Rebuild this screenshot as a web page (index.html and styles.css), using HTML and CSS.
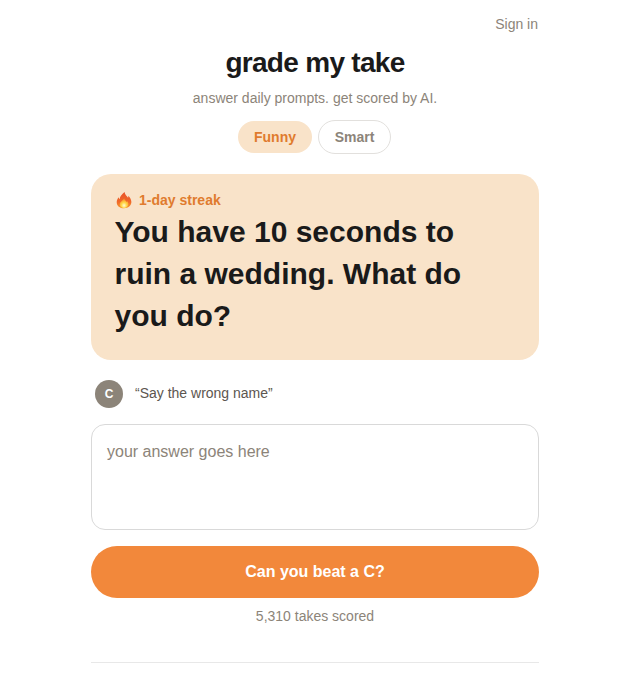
FILE: index.html
```html
<!DOCTYPE html>
<html lang="en">
<head>
<meta charset="utf-8">
<title>grade my take</title>
<link rel="stylesheet" href="styles.css">
</head>
<body>
<main class="page">
  <nav class="topbar"><a class="signin" href="#">Sign in</a></nav>
  <header class="intro">
    <h1 class="title">grade my take</h1>
    <p class="subtitle">answer daily prompts. get scored by AI.</p>
    <div class="tabs">
      <button class="tab tab-active">Funny</button>
      <button class="tab tab-idle">Smart</button>
    </div>
  </header>
  <section class="card">
    <div class="streak">
      <svg class="flame" viewBox="0 0 18 20" width="16" height="18" preserveAspectRatio="none" aria-hidden="true">
        <defs>
          <linearGradient id="outer" x1="0" y1="0" x2="0" y2="1">
            <stop offset="0" stop-color="#e8522a"/>
            <stop offset="0.6" stop-color="#f0682a"/>
            <stop offset="1" stop-color="#f79a2e"/>
          </linearGradient>
          <radialGradient id="inner" cx="0.5" cy="0.72" r="0.6">
            <stop offset="0" stop-color="#fffbd8"/>
            <stop offset="0.5" stop-color="#ffd84a"/>
            <stop offset="1" stop-color="#fb9b2c"/>
          </radialGradient>
        </defs>
        <path fill="url(#outer)" d="M9.600 1C10 4 12.200 5.400 13.600 7.400c.3-.7.400-1.400.3-2.200C16 7.300 17.300 9.800 17.300 12.300c0 4-3.500 6.900-8.300 6.900S.8 16.300.8 12.400c0-2.300 1-4 2.300-5.500.1.900.4 1.700 1 2.300C4.200 6 6.600 3.500 9.600 1z"/>
        <path fill="url(#inner)" d="M9.300 8.400c.3 1.800 1.700 2.500 2.600 3.700.3-.3.500-.7.600-1.100 1 1 1.500 2.300 1.500 3.500 0 2.500-2.100 4.500-5 4.500s-4.900-1.900-4.900-4.200c0-2.300 3-3.800 5.200-6.400z"/>
      </svg>
      <span class="streak-label">1-day streak</span>
    </div>
    <h2 class="prompt">You have 10 seconds to ruin a wedding. What do you do?</h2>
  </section>
  <div class="previous">
    <span class="avatar">C</span>
    <span class="quote">“Say the wrong name”</span>
  </div>
  <textarea class="answer" placeholder="your answer goes here"></textarea>
  <button class="submit">Can you beat a C?</button>
  <p class="count">5,310 takes scored</p>
  <hr class="divider">
</main>
</body>
</html>
```
FILE: styles.css
```css
* { box-sizing: border-box; }
html, body { margin: 0; background: #fff; height: 674px; overflow: hidden; }
body { font-family: "Liberation Sans", Arial, sans-serif; color: #1a1a1a; }
.page { width: 448px; margin-left: 91px; padding-top: 16px; display: flex; flex-direction: column; }
.topbar { display: flex; justify-content: flex-end; height: 16px; padding-right: 1px; }
.signin { font-size: 14px; line-height: 16px; color: #8c8479; text-decoration: none; }
.intro { display: flex; flex-direction: column; align-items: center; }
.title { margin: 15px 0 0; font-size: 28px; line-height: 32px; font-weight: 700; letter-spacing: -0.7px; color: #1a1a1a; }
.subtitle { margin: 11px 0 0; font-size: 14px; line-height: 16px; color: #8c8479; }
.tabs { display: flex; align-items: center; gap: 6px; margin-top: 14px; padding-right: 1px; }
.tab { font-family: inherit; font-size: 14px; font-weight: 700; padding: 0; border-radius: 17px; }
.tab-active { width: 74px; height: 32px; border: 0; background: #f9e3c9; color: #e07b2e; }
.tab-idle { width: 73px; height: 34px; border: 1px solid #e2e0dd; background: #fff; color: #8c8479; }
.card { margin-top: 20px; height: 186px; background: #f9e3c9; border-radius: 20px; padding: 16px 23.5px 0; }
.streak { display: flex; align-items: center; gap: 7px; height: 20px; padding-left: 1.5px; }
.flame { display: block; flex: none; }
.streak-label { font-size: 14px; font-weight: 700; color: #e07b2e; }
.prompt { margin: 1px 0 0; font-size: 30px; line-height: 42px; font-weight: 700; letter-spacing: 0; color: #1a1a1a; }
.previous { display: flex; align-items: center; gap: 12px; margin-top: 20px; padding-left: 4px; height: 28px; }
.avatar { width: 28px; height: 28px; border-radius: 50%; background: #8c8479; color: #fff; font-size: 12px; font-weight: 700; display: flex; align-items: center; justify-content: center; }
.quote { font-size: 14px; color: #5c5650; padding-bottom: 2px; }
.answer { display: block; margin-top: 16px; width: 448px; height: 106px; border: 1px solid #d9d9d9; border-radius: 14px; padding: 16px 15px; font-family: inherit; font-size: 16px; line-height: 22px; resize: none; background: #fff; outline: 0; }
.answer::placeholder { color: #8c8479; opacity: 1; }
.submit { display: block; margin-top: 16px; width: 448px; height: 52px; border: 0; border-radius: 26px; background: #f2883b; color: #fff; font-family: inherit; font-size: 16px; font-weight: 700; letter-spacing: 0; }
.count { margin: 10px 0 0; font-size: 14px; line-height: 16px; text-align: center; color: #8c8479; }
.divider { margin: 38px 0 0; border: 0; border-top: 1px solid #e8e8e8; height: 0; }
```
